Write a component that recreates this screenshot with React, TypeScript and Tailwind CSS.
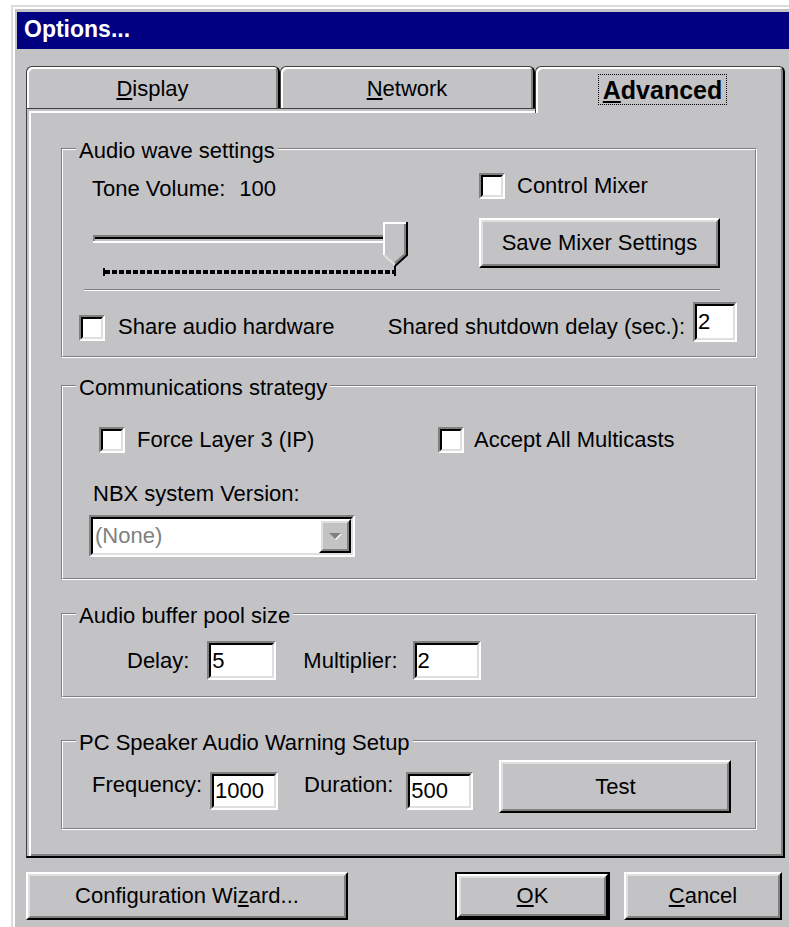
import type { ReactNode } from "react";

// Win95 bevel pieces
const RAISED_OUTER = "border-2 border-t-white border-l-white border-r-black border-b-black";
const RAISED_INNER = "border-2 border-t-[#dfdfdf] border-l-[#dfdfdf] border-r-[#808080] border-b-[#808080]";
const SUNK_OUTER = "border-2 border-t-[#808080] border-l-[#808080] border-r-white border-b-white";
const SUNK_INNER = "border-2 border-t-black border-l-black border-r-[#dfdfdf] border-b-[#dfdfdf]";

function Button({ children, className = "", primary = false }: { children: ReactNode; className?: string; primary?: boolean }) {
  return (
    <button type="button" className={`shrink-0 ${primary ? "border-2 border-black" : ""} ${className}`}>
      <div className={`h-full ${RAISED_OUTER}`}>
        <div className={`flex h-full items-center justify-center ${RAISED_INNER}`}>{children}</div>
      </div>
    </button>
  );
}

function Field({ value, className = "" }: { value: string; className?: string }) {
  return (
    <div className={`shrink-0 ${SUNK_OUTER} ${className}`}>
      <div className={`flex h-full items-center bg-white pl-[1px] ${SUNK_INNER}`}>{value}</div>
    </div>
  );
}

function Check({ className = "" }: { className?: string }) {
  return (
    <div className={`h-[26px] w-[26px] shrink-0 ${SUNK_OUTER} ${className}`}>
      <div className={`h-full bg-white ${SUNK_INNER}`} />
    </div>
  );
}

function Group({ title, className = "", children }: { title: string; className?: string; children: ReactNode }) {
  return (
    <div className={`relative border border-t-[#808080] border-l-[#808080] border-r-white border-b-white ${className}`}>
      <div className="h-full border border-t-white border-l-white border-r-[#808080] border-b-[#808080]">{children}</div>
      <span className="absolute left-[14px] top-[-11px] bg-[#c3c3c6] px-[3px]">{title}</span>
    </div>
  );
}

function VolumeSlider() {
  return (
    <svg width="331" height="62" viewBox="0 0 331 62" className="ml-[21px] mt-[16px] block">
      {/* groove */}
      <rect x="9" y="17" width="292" height="2" fill="#808080" />
      <rect x="9" y="17" width="2" height="7" fill="#808080" />
      <rect x="11" y="19" width="290" height="2" fill="#000" />
      <rect x="9" y="23" width="292" height="2" fill="#fff" />
      {/* thumb */}
      <polygon points="299,4 323,4 323,37 311,48 299,37" fill="#c3c3c6" />
      <polyline points="300,37 300,5 322,5" fill="none" stroke="#fff" strokeWidth="2" />
      <polyline points="300,37 311,47" fill="none" stroke="#dfdfdf" strokeWidth="2" />
      <polyline points="321,6 321,36 311,45" fill="none" stroke="#808080" strokeWidth="2" />
      <polyline points="323,4 323,37 311,48" fill="none" stroke="#000" strokeWidth="2" />
      {/* ticks */}
      <line x1="21" y1="54" x2="311" y2="54" stroke="#000" strokeWidth="4" strokeDasharray="5 2" />
      <rect x="19" y="50" width="2" height="8" fill="#000" />
      <rect x="310" y="48" width="2" height="10" fill="#000" />
    </svg>
  );
}

export default function App() {
  return (
    <div className="h-[927px] w-[789px] overflow-hidden bg-white pl-[11px] pt-[5px] font-['Liberation_Sans',Arial,sans-serif] text-[22px] leading-[26px] text-black">
      <div className="h-full border-l-2 border-t-2 border-[#dcdcdc] bg-[#c3c3c6]">
        <div className="h-full border-l-2 border-t-2 border-white pl-[2px] pt-[3px]">
          {/* title bar */}
          <div className="flex h-[37px] items-center bg-[#000080] pb-[4px] pl-[7px] text-[23px] font-bold text-white">Options...</div>

          <div className="ml-[9px] mt-[17px] w-[759px]">
            {/* tabs */}
            <div className="flex h-[42px] items-start">
              <div className="flex h-[42px] w-[254px] justify-center rounded-t-[6px] border-l border-t border-r-2 border-[#404040] border-r-black pt-[9px] shadow-[inset_2px_2px_0_#fff,inset_-2px_0_0_#808080]">
                <span><span className="underline">D</span>isplay</span>
              </div>
              <div className="flex h-[42px] w-[255px] justify-center rounded-t-[6px] border-l border-t border-r-2 border-[#404040] border-r-black pt-[9px] shadow-[inset_2px_2px_0_#fff,inset_-2px_0_0_#808080]">
                <span><span className="underline">N</span>etwork</span>
              </div>
              <div className="relative z-10 flex h-[47px] w-[250px] justify-center rounded-t-[6px] border-l border-t border-r-2 border-[#404040] border-r-black bg-[#c3c3c6] pl-[6px] pt-[7px] shadow-[inset_2px_2px_0_#fff,inset_-2px_0_0_#808080]">
                <span className="flex h-[31px] w-[129px] items-center justify-center border border-dotted border-black text-[25px] font-bold">
                  <span><span className="underline">A</span>dvanced</span>
                </span>
              </div>
            </div>

            {/* tab page */}
            <div className="h-[750px] border-l border-t border-r-2 border-b-2 border-[#404040] border-r-black border-b-black pl-[34px] pr-[26px] pt-[39px] shadow-[inset_2px_2px_0_#c3c3c6,inset_4px_4px_0_#fff,inset_-2px_-2px_0_#808080]">
              <Group title="Audio wave settings" className="h-[210px]">
                <div className="mt-[23px] flex">
                  <div className="w-[416px]">
                    <div className="mt-[3px] flex pl-[29px]">
                      <span>Tone Volume:</span>
                      <span className="ml-[14px]">100</span>
                    </div>
                    <VolumeSlider />
                  </div>
                  <div>
                    <div className="flex items-center">
                      <Check />
                      <span className="ml-[12px]">Control Mixer</span>
                    </div>
                    <Button className="mt-[19px] h-[50px] w-[241px]">Save Mixer Settings</Button>
                  </div>
                </div>
                <div className="ml-[21px] mt-[9px] h-[2px] w-[636px] border-t border-b border-t-[#808080] border-b-white" />
                <div className="mt-[11px] flex h-[40px] items-start">
                  <Check className="ml-[16px] mt-[13px]" />
                  <span className="ml-[13px] mt-[12px]">Share audio hardware</span>
                  <span className="ml-auto mt-[12px]">Shared shutdown delay (sec.):</span>
                  <Field value="2" className="ml-[8px] mr-[18px] h-[40px] w-[44px]" />
                </div>
              </Group>

              <Group title="Communications strategy" className="mt-[27px] h-[195px]">
                <div className="mt-[40px] flex items-center">
                  <div className="flex w-[375px] items-center">
                    <Check className="ml-[36px]" />
                    <span className="ml-[12px]">Force Layer 3 (IP)</span>
                  </div>
                  <Check />
                  <span className="ml-[10px]">Accept All Multicasts</span>
                </div>
                <div className="ml-[30px] mt-[28px]">NBX system Version:</div>
                <div className={`ml-[26px] mt-[8px] h-[42px] w-[266px] ${SUNK_OUTER}`}>
                  <div className={`flex h-full bg-white ${SUNK_INNER}`}>
                    <span className="flex-1 self-center pl-[2px] text-[#808080]">(None)</span>
                    <div className={`h-full w-[32px] ${RAISED_OUTER}`}>
                      <div className={`flex h-full items-center justify-center bg-[#c3c3c6] ${RAISED_INNER}`}>
                        <svg width="14" height="8" viewBox="0 0 14 8">
                          <polygon points="1,1 13,1 7,7" fill="#fff" transform="translate(1,1)" />
                          <polygon points="1,1 13,1 7,7" fill="#808080" />
                        </svg>
                      </div>
                    </div>
                  </div>
                </div>
              </Group>

              <Group title="Audio buffer pool size" className="mt-[33px] h-[85px]">
                <div className="mt-[26px] flex h-[39px] items-center">
                  <span className="ml-[64px]">Delay:</span>
                  <Field value="5" className="ml-[18px] h-[39px] w-[69px]" />
                  <span className="ml-[27px]">Multiplier:</span>
                  <Field value="2" className="ml-[15px] h-[39px] w-[68px]" />
                </div>
              </Group>

              <Group title="PC Speaker Audio Warning Setup" className="mt-[42px] h-[90px]">
                <div className="mt-[18px] flex items-start">
                  <span className="ml-[29px] mt-[12px]">Frequency:</span>
                  <Field value="1000" className="ml-[8px] mt-[12px] h-[38px] w-[68px]" />
                  <span className="ml-[26px] mt-[12px]">Duration:</span>
                  <Field value="500" className="ml-[13px] mt-[12px] h-[38px] w-[67px]" />
                  <Button className="ml-[26px] h-[53px] w-[232px]">Test</Button>
                </div>
              </Group>
            </div>

            {/* dialog buttons */}
            <div className="mt-[14px] flex">
              <Button className="h-[48px] w-[322px]">
                <span>Configuration Wi<span className="underline">z</span>ard...</span>
              </Button>
              <Button primary className="ml-[107px] h-[48px] w-[155px]">
                <span><span className="underline">O</span>K</span>
              </Button>
              <Button className="ml-[14px] h-[48px] w-[158px]">
                <span><span className="underline">C</span>ancel</span>
              </Button>
            </div>
          </div>
        </div>
      </div>
    </div>
  );
}
